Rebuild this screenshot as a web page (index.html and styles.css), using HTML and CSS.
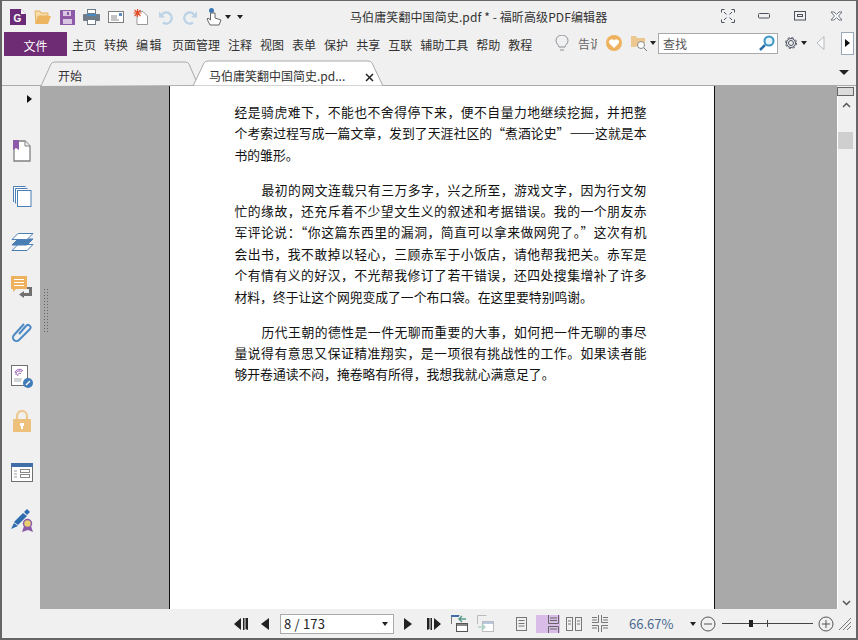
FILE: index.html
```html
<!DOCTYPE html>
<html lang="zh">
<head>
<meta charset="utf-8">
<title>福昕高级PDF编辑器</title>
<link rel="stylesheet" href="styles.css">
</head>
<body>
<div class="window">
  <header class="titlebar">
    <div class="qat">
      <svg class="ic" width="16" height="16" viewBox="0 0 16 16"><path d="M0 0h11l5 5v11H0z" fill="#6b2a78"/><path d="M11 0l5 5h-5z" fill="#fff"/><text x="3.500" y="12.500" class="logo-g">G</text></svg>
      <svg class="ic" width="18" height="15" viewBox="0 0 18 15"><path d="M1 1h5l1 2h7v3H5L2 13z" fill="#f7dca8" stroke="#e6b263"/><path d="M4 6h13l-3 8H1z" fill="#eeb561"/></svg>
      <svg class="ic" width="15" height="15" viewBox="0 0 15 15"><rect width="15" height="15" fill="#8e5aa8"/><rect x="3" y="1" width="8" height="5" fill="#d9c7e2"/><rect x="7" y="2" width="2" height="3" fill="#8e5aa8"/><rect x="3" y="9" width="9" height="5" fill="#d9c7e2"/></svg>
      <svg class="ic" width="17" height="16" viewBox="0 0 17 16"><rect x="4.500" y=".5" width="8" height="4" fill="#fff" stroke="#6f7b86"/><rect y="5" width="17" height="7" rx="1" fill="#6f7b86"/><rect x="4" y="5" width="9" height="2" fill="#4a8ac4"/><rect x="4.500" y="10.500" width="8" height="5" fill="#fff" stroke="#6f7b86"/></svg>
      <svg class="ic" width="16" height="12" viewBox="0 0 16 12"><rect x=".5" y=".5" width="15" height="11" fill="#fff" stroke="#7d7d7d"/><path d="M3 5h6M3 7h6M3 9h8" stroke="#8a8a8a"/><rect x="11" y="2" width="3" height="3" fill="#5b8dc0"/></svg>
      <svg class="ic ic-new" width="15" height="16" viewBox="0 0 15 16"><path d="M4 2.500h6l4.500 4.500v8.500H4z" fill="#fff" stroke="#999"/><path d="M4.500 0v8M.5 4h8M1.500 1l6 6M7.500 1l-6 6" stroke="#e0502a" stroke-width="1.200"/></svg>
      <svg class="ic ic-undo" width="16" height="15" viewBox="0 0 16 15"><path d="M4 4.500a5.500 5.500 0 1 1 1 8" fill="none" stroke="#bcd2e6" stroke-width="2.400"/><path d="M1 1.500v6h6z" fill="#bcd2e6"/></svg>
      <svg class="ic" width="16" height="15" viewBox="0 0 16 15"><path d="M12 4.500a5.500 5.500 0 1 0-1 8" fill="none" stroke="#bcd2e6" stroke-width="2.400"/><path d="M15 1.500v6H9z" fill="#bcd2e6"/></svg>
      <svg class="ic ic-hand" width="16" height="18" viewBox="0 0 16 18"><circle cx="5.500" cy="2.500" r="2.500" fill="#3d78b8"/><path d="M4.500 5v7L2 10l-1 1 3 6h9l2-5-6-2V5z" fill="#fff" stroke="#666"/></svg>
      <span class="tri"></span>
      <span class="tri tri-bar"></span>
    </div>
    <div class="doc-title">马伯庸笑翻中国简史.pdf * - 福昕高级PDF编辑器</div>
    <div class="winbtns">
      <svg width="14" height="14" viewBox="0 0 14 14" fill="none" stroke="#4c5160"><path d="M.5 3.500v-3h3M10.500 .5h3v3M.5 10.500v3h3M10.500 13.500h3v-3M5.500 5.500L3 3M8.500 5.500L11 3M5.500 8.500L3 11M8.500 8.500L11 11"/></svg>
      <svg width="12" height="6" viewBox="0 0 12 6" fill="none" stroke="#4c5160"><rect x=".5" y=".5" width="11" height="4.500" rx="1"/></svg>
      <svg width="12" height="10" viewBox="0 0 12 10" fill="none" stroke="#4c5160"><rect x=".5" y=".5" width="11" height="8.500"/><rect x="3.500" y="3.500" width="5" height="2"/></svg>
      <svg width="13" height="10" viewBox="0 0 13 10" fill="#fff" stroke="#6b7280" stroke-width="1"><path d="M1 1h3l2.500 2.500L9 1h3L8.500 5 12 9H9L6.500 6.500 4 9H1l3.500-4z"/></svg>
    </div>
  </header>

  <nav class="menubar">
    <div class="file-btn">文件</div>
    <div class="menu-items">
      <span>主页</span><span>转换</span><span class="m-wide">编辑</span><span>页面管理</span><span>注释</span><span>视图</span><span>表单</span><span>保护</span><span>共享</span><span>互联</span><span>辅助工具</span><span>帮助</span><span>教程</span>
    </div>
    <div class="menu-tools">
      <svg class="bulb" width="14" height="18" viewBox="0 0 14 18" fill="none" stroke="#8a8f96"><path d="M4 12c0-2-3-3-3-6.500a6 5.500 0 0 1 12 0C13 9 10 10 10 12zM5 15h4"/></svg>
      <span class="tell">告诉</span>
      <svg class="heart" width="16" height="16" viewBox="0 0 16 16"><circle cx="8" cy="8" r="8" fill="#eeb25e"/><path d="M8 13L3.500 8.500a2.600 2.600 0 0 1 4.500-3 2.600 2.600 0 0 1 4.500 3z" fill="#fff"/></svg>
      <svg class="foldsearch" width="17" height="16" viewBox="0 0 17 16"><path d="M0 1h5l1 2h8v5H8l-3 4H0z" fill="#ecc790"/><circle cx="10" cy="10" r="3.500" fill="#fff" stroke="#888"/><path d="M13 13l3 3" stroke="#777"/></svg>
      <span class="tri"></span>
      <div class="search">
        <span>查找</span>
        <svg width="16" height="17" viewBox="0 0 16 17" fill="none"><circle cx="10" cy="6" r="4.500" fill="#e6f3fa" stroke="#3c94c4" stroke-width="2"/><path d="M6 10l-5 5" stroke="#2a6ca8" stroke-width="2.500"/></svg>
      </div>
      <svg class="gear" width="14" height="14" viewBox="0 0 14 14" fill="none" stroke="#4c5160"><circle cx="7" cy="7" r="2.500"/><circle cx="7" cy="7" r="5.500" stroke-dasharray="2.300 2"/><circle cx="7" cy="7" r="4.500"/></svg>
      <span class="tri"></span>
      <svg class="prev" width="9" height="14" viewBox="0 0 9 14"><path d="M8 .5v13L1 7z" fill="#fafafa" stroke="#b5b9bd"/></svg>
      <div class="next-box"><span class="tri-right"></span></div>
    </div>
  </nav>

  <div class="tabstrip">
    <div class="tab tab-home">
      <svg class="tab-shape" width="158" height="25" viewBox="0 0 158 25"><path d="M0 25L10 3q1-2 4-2h130q3 0 4 2l9 21" fill="#f0f0f0" stroke="#aaa"/></svg>
      <span class="tab-label">开始</span>
    </div>
    <div class="tab tab-doc">
      <svg class="tab-shape" width="192" height="26" viewBox="0 0 192 26"><path d="M0 26L11 3q1-2 4-2h160q3 0 4 2l11 23z" fill="#fff" stroke="#aaa"/></svg>
      <span class="tab-label">马伯庸笑翻中国简史.pd...</span>
      <svg class="tab-x" width="9" height="9" viewBox="0 0 9 9"><path d="M1 1l7 7M8 1L1 8" stroke="#222" stroke-width="1.500"/></svg>
    </div>
    <span class="tri tri-big"></span>
  </div>

  <main class="workspace">
    <aside class="sidebar">
      <span class="tri-right side-toggle"></span>
      <div class="side-icons">
        <svg width="18" height="22" viewBox="0 0 18 22"><path d="M1 1h11l5 5v15H1z" fill="#fff" stroke="#808080" stroke-width="1.300"/><path d="M12 1v5h5" fill="#eee" stroke="#808080"/><path d="M0 0h6v10l-3-2-3 2z" fill="#8e5aa8"/></svg>
        <svg width="19" height="21" viewBox="0 0 19 21" fill="#fff" stroke="#4a7fb5"><path d="M.5 16V.500h12M2.500 17.500V2.500h12"/><rect x="4.500" y="4.500" width="13.500" height="16"/></svg>
        <svg width="23" height="20" viewBox="0 0 23 20" stroke="#4a7fb5" fill="#fff"><path d="M1 18.500h15l6-6H7z"/><path d="M1 13h15l6-6H7z" fill="#4a7fb5"/><path d="M1 7.500h15l6-6H7z"/></svg>
        <svg width="23" height="22" viewBox="0 0 23 22"><path d="M16 11h5v9h-8v2l-5-3.500 5-3.500v2h5v-4h-2z" fill="#707070"/><path d="M0 0h16v13H5l-3 3v-3H0z" fill="#eeb25e"/><path d="M3 3.500h10M3 6.500h10M3 9.500h10" stroke="#fff"/></svg>
        <svg width="20" height="22" viewBox="0 0 20 22" fill="none" stroke="#4f8ac4" stroke-width="2"><path d="M7 13l7-8a2.300 2.300 0 0 1 4 3L7 19a3.500 3.500 0 0 1-5-5L12 3"/></svg>
        <svg width="22" height="23" viewBox="0 0 22 23"><rect x=".5" y=".5" width="16" height="20" fill="#fff" stroke="#707070"/><path d="M4 8a4.500 4.500 0 0 1 8-2M5 10a3.500 3.500 0 0 1 6-3M7 11a1.500 1.500 0 0 1 3-2" fill="none" stroke="#9a5fb0"/><path d="M3 14h8M3 16h7" stroke="#aaa"/><circle cx="17" cy="18" r="5" fill="#3f7cb8"/><path d="M15 20l4-4" stroke="#fff" stroke-width="1.500"/></svg>
        <svg width="18" height="22" viewBox="0 0 18 22"><path d="M4 9V6a5 5 0 0 1 10 0v3" fill="none" stroke="#eec98f" stroke-width="2.200"/><rect y="9" width="18" height="13" rx="1" fill="#edc07c"/><path d="M7 13h4v3h-1v3H8v-3H7z" fill="#fff"/></svg>
        <svg width="22" height="19" viewBox="0 0 22 19"><rect x=".5" y=".5" width="21" height="18" fill="#fff" stroke="#707070"/><rect width="22" height="4" fill="#3f6ea8"/><path d="M3 8h3M3 11h3M3 14h3" stroke="#999"/><rect x="9.500" y="6.500" width="9" height="3" fill="#fff" stroke="#888"/><rect x="9.500" y="11.500" width="9" height="3" fill="#fff" stroke="#888"/></svg>
        <svg width="22" height="23" viewBox="0 0 22 23"><path d="M0 20l3-6 4 3z" fill="#2e6cb0"/><path d="M3 13l9-9 4 3-9 9z" fill="#2e6cb0"/><path d="M13 3l3-3 3 3-3 3z" fill="#2e6cb0"/><path d="M11 23l2-6h7l2 6-5-2z" fill="#8a5aa8"/><circle cx="16.500" cy="14.500" r="4" fill="#e8d070" stroke="#8a5aa8" stroke-width="1.500"/></svg>
      </div>
    </aside>
    <div class="canvas">
      <span class="grip"></span>
      <article class="page">
        <div class="p">
          <div class="l">经是骑虎难下，不能也不舍得停下来，便不自量力地继续挖掘，并把整</div>
          <div class="l">个考索过程写成一篇文章，发到了天涯社区的“煮酒论史”<b class="dash">——</b>这就是本</div>
          <div class="l e">书的雏形。</div>
        </div>
        <div class="p">
          <div class="l i">最初的网文连载只有三万多字，兴之所至，游戏文字，因为行文匆</div>
          <div class="l">忙的缘故，还充斥着不少望文生义的叙述和考据错误。我的一个朋友赤</div>
          <div class="l">军评论说：“你这篇东西里的漏洞，简直可以拿来做网兜了。”这次有机</div>
          <div class="l">会出书，我不敢掉以轻心，三顾赤军于小饭店，请他帮我把关。赤军是</div>
          <div class="l">个有情有义的好汉，不光帮我修订了若干错误，还四处搜集增补了许多</div>
          <div class="l e">材料，终于让这个网兜变成了一个布口袋。在这里要特别鸣谢。</div>
        </div>
        <div class="p">
          <div class="l i">历代王朝的德性是一件无聊而重要的大事，如何把一件无聊的事尽</div>
          <div class="l">量说得有意思又保证精准翔实，是一项很有挑战性的工作。如果读者能</div>
          <div class="l e">够开卷通读不闷，掩卷略有所得，我想我就心满意足了。</div>
        </div>
      </article>
    </div>
    <div class="scrollbar">
      <span class="split"></span>
      <svg class="chev" width="9" height="6" viewBox="0 0 9 6"><path d="M1 5l3.500-3.500L8 5" fill="none" stroke="#555" stroke-width="1.500"/></svg>
      <span class="thumb"></span>
      <svg class="chev chev-down" width="9" height="6" viewBox="0 0 9 6"><path d="M1 1l3.500 3.500L8 1" fill="none" stroke="#555" stroke-width="1.500"/></svg>
    </div>
  </main>

  <footer class="statusbar">
    <div class="nav">
      <svg width="14" height="12" viewBox="0 0 14 12" fill="#222"><path d="M7 0v12L0 6zM9 0h1.500v12H9zM11.500 0H14v12l-2.500-1z"/></svg>
      <svg class="n2" width="8" height="12" viewBox="0 0 8 12" fill="#222"><path d="M8 0v12L0 6z"/></svg>
      <div class="pagebox"><span>8 / 173</span><span class="tri tri-sm"></span></div>
      <svg class="n3" width="8" height="12" viewBox="0 0 8 12" fill="#222"><path d="M0 0v12l8-6z"/></svg>
      <svg class="n4" width="14" height="12" viewBox="0 0 14 12" fill="#222"><path d="M7 0v12l7-6zM5 0H3.500v12H5zM2.500 0H0v12l2.500-1z"/></svg>
      <svg class="n5" width="17" height="17" viewBox="0 0 17 17"><path d="M.5 9V.5h8" fill="none" stroke="#777"/><rect width="8" height="2" fill="#3f6ea8"/><rect x="5.500" y="8.500" width="11" height="8" fill="#fff" stroke="#555"/><rect x="6" y="9" width="10" height="2" fill="#888"/><path d="M15 4H9M11 1L8 4l3 3" fill="none" stroke="#5a9a8a" stroke-width="1.500"/></svg>
      <svg class="n6" width="17" height="17" viewBox="0 0 17 17"><path d="M.5 9V.5h9" fill="none" stroke="#bbb"/><rect x="5.500" y="6.500" width="11" height="10" fill="#fff" stroke="#bbb"/><rect x="6" y="7" width="10" height="2" fill="#b7c9de"/><path d="M1 12h6M5 9l3 3-3 3" fill="none" stroke="#b4d4c8" stroke-width="1.500"/></svg>
    </div>
    <div class="views">
      <svg width="11" height="14" viewBox="0 0 11 14" fill="none" stroke="#777"><rect x=".5" y=".5" width="10" height="13"/><path d="M2.500 3.500h6M2.500 6.500h6M2.500 9h6"/></svg>
      <div class="view-on"><svg width="11" height="18" viewBox="0 0 11 18" fill="none" stroke="#666"><path d="M.5 0v8.500h10V0M.5 18v-6.500h10V18M2 3h7M2 5.500h7M2 14h7"/></svg></div>
      <svg width="16" height="14" viewBox="0 0 16 14" fill="none" stroke="#777"><rect x=".5" y=".5" width="6" height="13"/><rect x="9.500" y=".5" width="6" height="13"/><path d="M2 4h3M2 7h3M11 4h3M11 7h3"/></svg>
      <svg width="16" height="17" viewBox="0 0 16 17" fill="none" stroke="#777"><path d="M6.500 0v7.500H0M9.500 0v7.500H16M6.500 17v-6.500H0M9.500 17v-6.500H16M0 2.500h5M0 5h5M11 2.500h5M11 5h5M0 13h5M11 13h5"/></svg>
    </div>
    <span class="zoom-val">66.67%</span>
    <span class="tri"></span>
    <svg class="z-minus" width="16" height="16" viewBox="0 0 16 16" fill="none" stroke="#555"><circle cx="8" cy="8" r="7"/><path d="M4 8h8"/></svg>
    <div class="slider"><span class="s-knob"></span><span class="s-tick"></span></div>
    <svg class="z-plus" width="16" height="16" viewBox="0 0 16 16" fill="none" stroke="#555"><circle cx="8" cy="8" r="7"/><path d="M4 8h8M8 4v8"/></svg>
    <svg class="resize" width="12" height="12" viewBox="0 0 12 12" stroke="#777"><path d="M0 12L12 0M4 12l8-8M8 12l4-4"/></svg>
  </footer>
</div>
</body>
</html>
```
FILE: styles.css
```css
* { box-sizing: border-box; }
html, body { margin: 0; padding: 0; }
body { width: 858px; height: 640px; overflow: hidden; background: #f0f0f0; font-family: "Noto Sans CJK SC", "Liberation Sans", sans-serif; font-size: 12px; color: #333; }
svg { display: block; flex: none; }
.window { width: 858px; height: 640px; border: 2px solid #666; border-top-width: 1px; display: flex; flex-direction: column; background: #f0f0f0; }

.titlebar { height: 29px; position: relative; display: flex; align-items: center; padding: 0 0 0 8px; flex: none; }
.qat { display: flex; align-items: center; gap: 8px; padding-top: 3px; }
.logo-g { font: bold 10px "Liberation Sans", sans-serif; fill: #fff; }
.ic-new { margin-left: 1px; }
.ic-undo { margin-left: 2px; }
.ic-hand { margin-left: 0; margin-right: -5px; }
.tri { display: inline-block; width: 0; height: 0; border-left: 3.5px solid transparent; border-right: 3.5px solid transparent; border-top: 4px solid #222; flex: none; }
.tri-bar { margin-left: -2px; }
.doc-title { position: absolute; left: 348px; top: 7px; line-height: 18px; white-space: nowrap; color: #333; letter-spacing: 0.1px; }
.winbtns { margin-left: auto; margin-right: 13px; display: flex; align-items: center; }
.winbtns svg:nth-child(1) { margin-right: 23px; }
.winbtns svg:nth-child(2) { margin-right: 24px; }
.winbtns svg:nth-child(3) { margin-right: 24px; }

.menubar { height: 26px; display: flex; align-items: center; padding-left: 2px; flex: none; }
.file-btn { width: 63px; height: 24px; margin-top: 1px; background: #6d2c73; color: #fff; text-align: center; line-height: 27px; flex: none; }
.menu-items { display: flex; gap: 8px; margin: 3px 0 0 5px; line-height: 18px; white-space: nowrap; }
.m-wide { margin-right: 1px; letter-spacing: 1.500px; }
.menu-items span { color: #333; }
.menu-tools { display: flex; align-items: center; margin-left: auto; }
.bulb { margin-right: 9px; margin-top: 1px; }
.tell { width: 19px; overflow: hidden; white-space: nowrap; color: #666; margin-right: 9px; line-height: 18px; padding-top: 1px; }
.heart { margin-right: 9px; }
.foldsearch { margin-right: 2px; }
.search { width: 120px; height: 21px; border: 1px solid #aaa; background: #fff; display: flex; align-items: center; justify-content: space-between; padding: 0 2px 0 4px; color: #555; margin-left: 2px; }
.gear { margin-left: 6px; margin-right: 3px; }
.prev { margin-left: 9px; margin-right: 16px; }
.next-box { width: 13px; height: 23px; border: 1px solid #9ba8b8; background: #fff; display: flex; align-items: center; justify-content: center; margin-right: 2px; }
.tri-right { display: inline-block; width: 0; height: 0; border-top: 4px solid transparent; border-bottom: 4px solid transparent; border-left: 5px solid #111; }

.tabstrip { height: 30px; display: flex; align-items: flex-end; padding-left: 39px; position: relative; flex: none; border-bottom: 1px solid #aaa; }
.tab { position: relative; height: 25px; flex: none; }
.tab-shape { position: absolute; left: 0; bottom: -1px; overflow: visible; }
.tab-label { position: relative; line-height: 18px; display: block; white-space: nowrap; }
.tab-home { width: 152px; }
.tab-home .tab-label { padding: 7px 0 0 17px; }
.tab-doc { width: 192px; }
.tab-doc .tab-label { padding: 7px 0 0 16px; }
.tab-x { position: absolute; left: 172px; top: 13px; }
.tri-big { position: absolute; right: 7px; top: 14px; border-left-width: 5px; border-right-width: 5px; border-top-width: 5px; }

.workspace { flex: 1; display: flex; min-height: 0; }
.sidebar { width: 38px; background: #f0f0f0; flex: none; position: relative; }
.side-toggle { position: absolute; left: 25px; top: 9px; }
.side-icons { display: flex; flex-direction: column; align-items: center; padding: 54px 0 0 2px; }
.side-icons svg:nth-child(1) { margin-bottom: 24px; }
.side-icons svg:nth-child(2) { margin-bottom: 25px; }
.side-icons svg:nth-child(3) { margin-bottom: 24px; }
.side-icons svg:nth-child(4) { margin-bottom: 23px; }
.side-icons svg:nth-child(5) { margin-bottom: 22px; }
.side-icons svg:nth-child(6) { margin-bottom: 22px; }
.side-icons svg:nth-child(7) { margin-bottom: 31px; }
.side-icons svg:nth-child(8) { margin-bottom: 27px; }
.canvas { flex: 1; background: #a9a9a9; position: relative; display: flex; justify-content: center; min-width: 0; }
.grip { position: absolute; left: 3px; top: 202px; width: 6px; height: 45px; background-image: radial-gradient(#666 0.8px, transparent 1px); background-size: 3px 3px; }
.page { width: 546px; height: 100%; background: #fff; border-left: 1px solid #111; border-right: 1px solid #111; padding: 15px 67px 0 65px; margin-left: 6px; font-size: 12.800px; color: #111; }
.p { margin-bottom: 13.500px; }
.l { height: 21.400px; line-height: 21.400px; text-align: justify; text-align-last: justify; white-space: nowrap; }
.l.e { text-align-last: left; }
.l.i { padding-left: 27px; }
.dash { font-weight: 900; color: #000; }

.scrollbar { width: 19px; background: #f0f0f0; border-left: 1px solid #fff; flex: none; display: flex; flex-direction: column; align-items: flex-start; }
.split { width: 17px; height: 9px; background: #dcdcdc; border: 1px solid #666; margin: 1px 0 0 -1px; display: block; flex: none; }
.chev { margin: 6px 0 0 4px; }
.thumb { width: 15px; height: 17px; background: #cfcfcf; margin-top: 24px; flex: none; }
.chev-down { margin-top: auto; margin-bottom: 3px; }

.statusbar { height: 29px; flex: none; display: flex; align-items: center; padding-left: 232px; }
.nav { display: flex; align-items: center; }
.n2 { margin-left: 13px; }
.pagebox { width: 114px; height: 20px; margin-left: 11px; border: 1px solid #aaa; background: #fff; display: flex; align-items: center; justify-content: space-between; padding: 0 4px 0 3px; color: #222; font-size: 13px; letter-spacing: 0.2px; }
.tri-sm { margin-right: 1px; }
.n3 { margin-left: 10px; }
.n4 { margin-left: 15px; }
.n5 { margin-left: 10px; }
.n6 { margin-left: 9px; }
.views { display: flex; align-items: center; margin-left: 22px; }
.view-on { width: 24px; height: 18px; background: #d9bce8; display: flex; justify-content: center; margin: 0 6px 0 9px; overflow: hidden; }
.views svg:last-child { margin-left: 10px; }
.zoom-val { margin-left: 21px; width: 61px; color: #4a6a90; font-size: 13px; }
.z-minus { margin-left: 4px; }
.slider { width: 91px; height: 1px; background: #444; margin-left: 6px; position: relative; }
.s-knob { position: absolute; left: 27px; top: -3px; width: 4px; height: 7px; background: #222; }
.s-tick { position: absolute; left: 45px; top: -3px; width: 1px; height: 7px; background: #444; }
.z-plus { margin-left: 5px; }
.resize { margin-left: 5px; }
```
